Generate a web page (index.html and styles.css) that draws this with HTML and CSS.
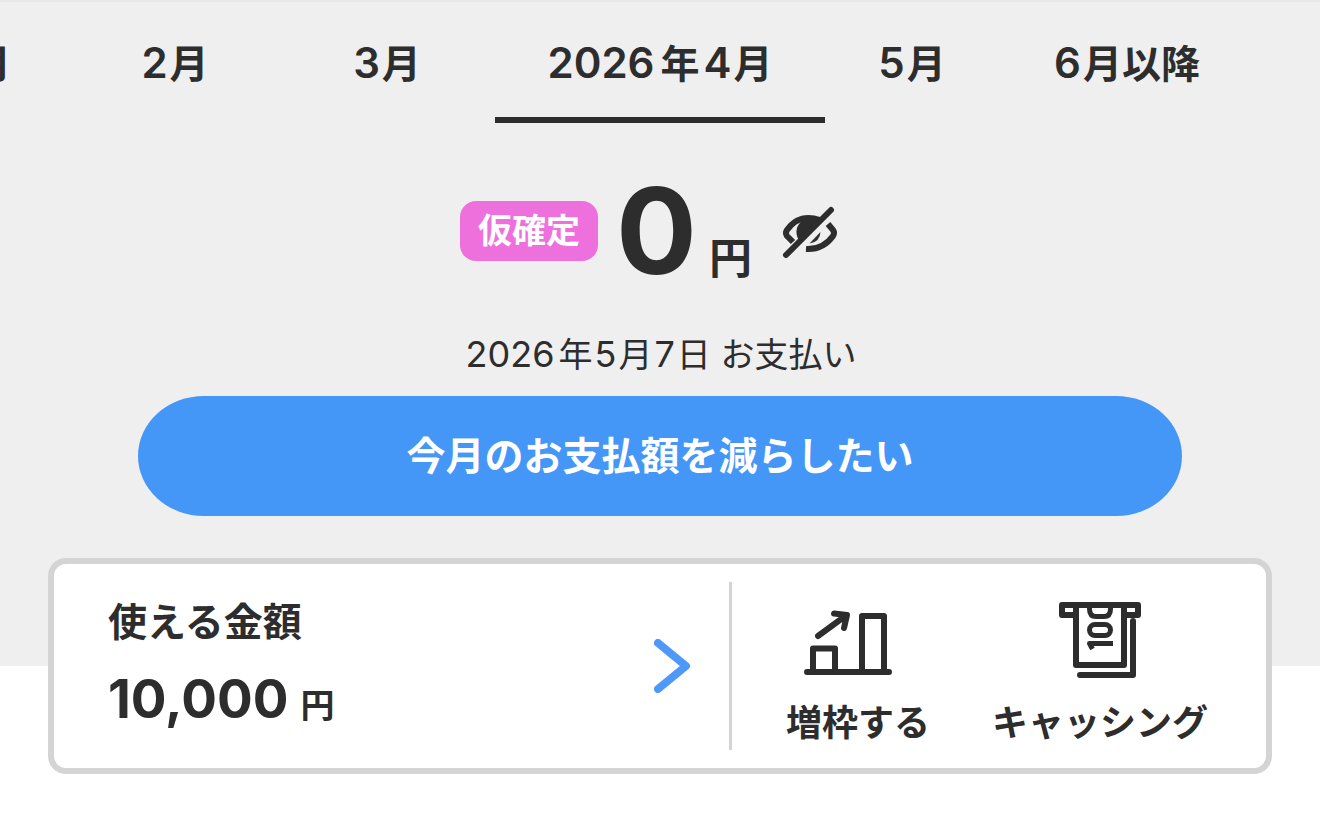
FILE: index.html
```html
<!DOCTYPE html>
<html lang="ja">
<head>
<meta charset="utf-8">
<meta name="viewport" content="width=device-width, initial-scale=1">
<title>お支払い</title>
<link rel="stylesheet" href="styles.css">
</head>
<body>
<main>
  <section class="summary">
    <nav class="months" aria-label="お支払い月">
      <button class="month month-cut" type="button"><span class="num">1</span>月</button>
      <button class="month" type="button"><span class="num">2</span>月</button>
      <button class="month" type="button"><span class="num">3</span>月</button>
      <button class="month month-active" type="button" aria-current="true"><span class="num year">2026</span>年<span class="num">4</span>月</button>
      <button class="month" type="button"><span class="num">5</span>月</button>
      <button class="month" type="button"><span class="num">6</span>月以降</button>
    </nav>
    <div class="amount">
      <span class="badge">仮確定</span>
      <p class="total"><span class="total-num">0</span><span class="total-unit">円</span></p>
      <button class="eye" type="button" aria-label="金額を隠す">
        <svg width="56" height="58" viewBox="0 -4 56 58" fill="none" stroke="#2d2d2d" stroke-linecap="round">
          <path d="M38 14C23 9 12 14 5 24Q3 27 5 30L11 36" stroke-width="6" stroke-linecap="butt" stroke-linejoin="round"/>
          <path d="M37 17A11.500 11.500 0 0 0 18 35Z" fill="#2d2d2d" stroke="none"/>
          <path d="M38.500 26Q38 36 27.500 37.500Z" fill="#2d2d2d" stroke="none"/>
          <path d="M46 18L51 24Q53 27 51 30Q41 44 24 43" stroke-width="6" stroke-linecap="butt" stroke-linejoin="round"/>
          <path d="M4 49L49 4" stroke-width="6"/>
        </svg>
      </button>
    </div>
    <p class="due"><span class="due-num year">2026</span>年<span class="due-num">5</span>月<span class="due-num">7</span>日 お支払い</p>
    <button class="reduce" type="button">今月のお支払額を減らしたい</button>
    <div class="card">
      <button class="available" type="button">
        <span class="available-text">
          <span class="label">使える金額</span>
          <span class="limit"><span class="limit-num">10,000</span><span class="limit-unit">円</span></span>
        </span>
        <svg width="38" height="54" viewBox="0 0 38 54" fill="none" stroke="#4d98f8" stroke-width="8" stroke-linecap="round" stroke-linejoin="round"><path d="M4 4L32 27L4 50"/></svg>
      </button>
      <div class="actions">
        <button class="action" type="button">
          <svg width="108" height="78" viewBox="0 0 108 78" fill="none" stroke="#2d2d2d" stroke-width="6" stroke-linecap="round" stroke-linejoin="round">
            <path d="M3 72H85M9 72V48.500H31V72M58 72V16H80V72M14 36L42 15.500M30 13.500L43 15L40 28"/>
          </svg>
          <span>増枠する</span>
        </button>
        <button class="action" type="button">
          <svg width="82" height="78" viewBox="0 0 82 78" fill="none" stroke="#2d2d2d" stroke-width="5" stroke-linecap="round" stroke-linejoin="round">
            <path d="M17 15H3V5H79V15H65M17 5V65H65V5M74 21V75H21" stroke-width="6"/>
            <path d="M30.500 6V9Q30.500 16.500 37 16.500H45Q51.500 16.500 51.500 9V6"/>
            <rect x="30.500" y="24.500" width="21" height="11" rx="5.500"/>
            <path d="M54 43.500H30.500L33.500 49" stroke-linecap="butt" stroke-width="5"/>
          </svg>
          <span>キャッシング</span>
        </button>
      </div>
    </div>
  </section>
</main>
</body>
</html>
```
FILE: styles.css
```css
* {
  box-sizing: border-box;
}

body {
  margin: 0;
  background: #fff;
  color: #2d2d2d;
  font-family: Inter, "Noto Sans CJK JP", sans-serif;
}

button {
  margin: 0;
  padding: 0;
  border: 0;
  background: none;
  color: inherit;
  font: inherit;
  cursor: pointer;
}

p {
  margin: 0;
}

svg {
  display: block;
  flex: none;
}

.summary {
  display: flow-root;
  margin-bottom: 158px;
  border-top: 2px solid #e8e8e8;
  background: #efefef;
}

.months {
  display: grid;
  grid-template-columns: 71fr 208fr 216fr 330fr 174fr 256fr 65fr;
  overflow: hidden;
}

.month {
  display: flex;
  align-items: baseline;
  justify-content: center;
  min-width: 0;
  padding: 32px 0 24px;
  border-bottom: 6px solid transparent;
  font-size: 39px;
  font-weight: 600;
  line-height: 58px;
  white-space: nowrap;
}

.month-cut {
  justify-content: flex-end;
  padding-right: 60px;
}

.month-active {
  border-color: #2d2d2d;
}

.num {
  margin-right: 2px;
  font-size: 42px;
}

.due-num {
  margin: 0 2px;
  font-size: 36px;
}

.year {
  margin-right: 6px;
}

.year + .num {
  margin-left: 4px;
}

.due .year {
  margin-right: 4px;
}

.amount {
  display: flex;
  align-items: center;
  justify-content: center;
  margin-top: 48px;
  padding-right: 22px;
}

.badge {
  padding: 0 18px;
  border-radius: 16px;
  background: #ed70dd;
  color: #fff;
  font-size: 34px;
  font-weight: 600;
  line-height: 60px;
}

.total {
  display: flex;
  align-items: baseline;
  margin-left: 18px;
  font-weight: 700;
}

.total-num {
  font-size: 120px;
  line-height: 120px;
}

.total-unit {
  margin-left: 12px;
  font-size: 43px;
  line-height: 43px;
}

.eye {
  margin-left: 30px;
}

.due {
  margin-top: 38px;
  font-size: 34px;
  line-height: 50px;
  text-align: center;
}

.reduce {
  display: block;
  width: calc(100% - 276px);
  margin: 16px auto 42px;
  border-radius: 66px / 60px;
  background: #4496f7;
  color: #fff;
  font-size: 39px;
  font-weight: 600;
  line-height: 120px;
}

.card {
  display: grid;
  grid-template-columns: 678fr 534fr;
  margin: 0 48px -108px;
  padding: 18px 0;
  border: 6px solid #d4d4d4;
  border-radius: 18px;
  background: #fff;
}

.available {
  display: flex;
  align-items: center;
  justify-content: space-between;
  padding: 0 37px 0 54px;
  border-right: 3px solid #d4d4d4;
  text-align: left;
}

.available-text {
  display: flex;
  flex-direction: column;
  gap: 8px;
}

.label {
  font-size: 39px;
  font-weight: 600;
  line-height: 58px;
}

.limit {
  display: flex;
  align-items: baseline;
  gap: 12px;
  line-height: 80px;
}

.limit-num {
  font-size: 53px;
  font-weight: 700;
}

.limit-unit {
  font-size: 34px;
  font-weight: 600;
  line-height: 34px;
}

.actions {
  display: flex;
  justify-content: center;
  gap: 62px;
  padding-right: 4px;
}

.action {
  display: flex;
  flex-direction: column;
  align-items: center;
  gap: 18px;
  padding: 18px 0 0;
  font-size: 36px;
  font-weight: 600;
  line-height: 54px;
}
```
